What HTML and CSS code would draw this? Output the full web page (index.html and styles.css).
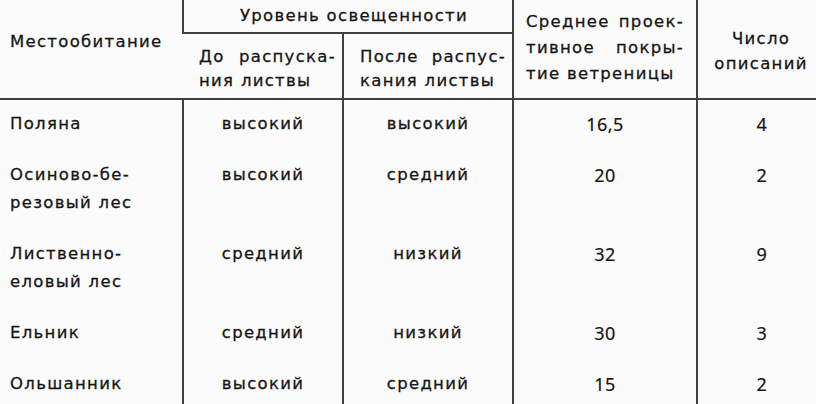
FILE: index.html
```html
<!DOCTYPE html>
<html lang="ru">
<head>
<meta charset="utf-8">
<link rel="stylesheet" href="styles.css">
</head>
<body>
<table class="tbl">
  <colgroup>
    <col class="c1"><col class="c2"><col class="c3"><col class="c4"><col class="c5">
  </colgroup>
  <thead>
    <tr class="h1">
      <th rowspan="2" class="habitat">Местообитание</th>
      <th colspan="2" class="level">Уровень освещенности</th>
      <th rowspan="2" class="cover">Среднее проек- тивное покры- тие ветреницы</th>
      <th rowspan="2" class="count">Число<br>описаний</th>
    </tr>
    <tr class="h2">
      <th class="sub">До распуска- ния листвы</th>
      <th class="sub">После распус- кания листвы</th>
    </tr>
  </thead>
  <tbody>
    <tr><td class="name">Поляна</td><td>высокий</td><td>высокий</td><td class="num">16,5</td><td class="num n5">4</td></tr>
    <tr><td class="name">Осиново-бе-<br>резовый лес</td><td>высокий</td><td>средний</td><td class="num">20</td><td class="num n5">2</td></tr>
    <tr><td class="name">Лиственно-<br>еловый лес</td><td>средний</td><td>низкий</td><td class="num">32</td><td class="num n5">9</td></tr>
    <tr><td class="name">Ельник</td><td>средний</td><td>низкий</td><td class="num">30</td><td class="num n5">3</td></tr>
    <tr><td class="name">Ольшанник</td><td>высокий</td><td>средний</td><td class="num">15</td><td class="num n5">2</td></tr>
  </tbody>
</table>
</body>
</html>
```

FILE: styles.css
```css
html, body {
  margin: 0;
  padding: 0;
  background: #fbfbfb;
  overflow: hidden;
}
.tbl {
  width: 816px;
  border-collapse: collapse;
  table-layout: fixed;
  font-family: "DejaVu Sans", sans-serif;
  font-size: 16.5px;
  letter-spacing: 1.3px;
  color: #151515;
  -webkit-text-stroke: 0.3px #151515;
  margin-left: -1px;
}
.c1 { width: 184px; }
.c2 { width: 160px; }
.c3 { width: 170px; }
.c4 { width: 184px; }
.c5 { width: 119px; }
th {
  font-weight: normal;
  border-left: 2px solid #404040;
  border-bottom: 2px solid #404040;
  padding: 0;
  vertical-align: middle;
}
.tbl th:first-child { border-left: none; }
.h1 { height: 33px; }
.h2 { height: 66px; }
.habitat {
  text-align: left;
  padding: 0 0 16px 11px;
}
.level {
  text-align: center;
  padding: 0 0 0 12px;
  line-height: 28px;
}
.cover {
  text-align: justify;
  text-align-last: left;
  line-height: 26px;
  padding: 0 12px 2px 12px;
}
.count {
  text-align: center;
  line-height: 25px;
  padding: 4px 0 0 8px;
}
.sub {
  text-align: justify;
  text-align-last: left;
  line-height: 24px;
  padding: 6px 6px 0 16px;
}
.h2 .sub:first-child { border-left: none; }
td {
  border-left: 2px solid #404040;
  padding: 10px 0 13px 0;
  line-height: 28px;
  text-align: center;
  vertical-align: top;
}
td.name {
  border-left: none;
  text-align: left;
  padding-left: 11px;
}
td.num {
  font-family: "Noto Sans", sans-serif;
  font-size: 18px;
  letter-spacing: 0.5px;
  -webkit-text-stroke: 0.2px #151515;
}
td.n5 { padding-left: 10px; }
```
